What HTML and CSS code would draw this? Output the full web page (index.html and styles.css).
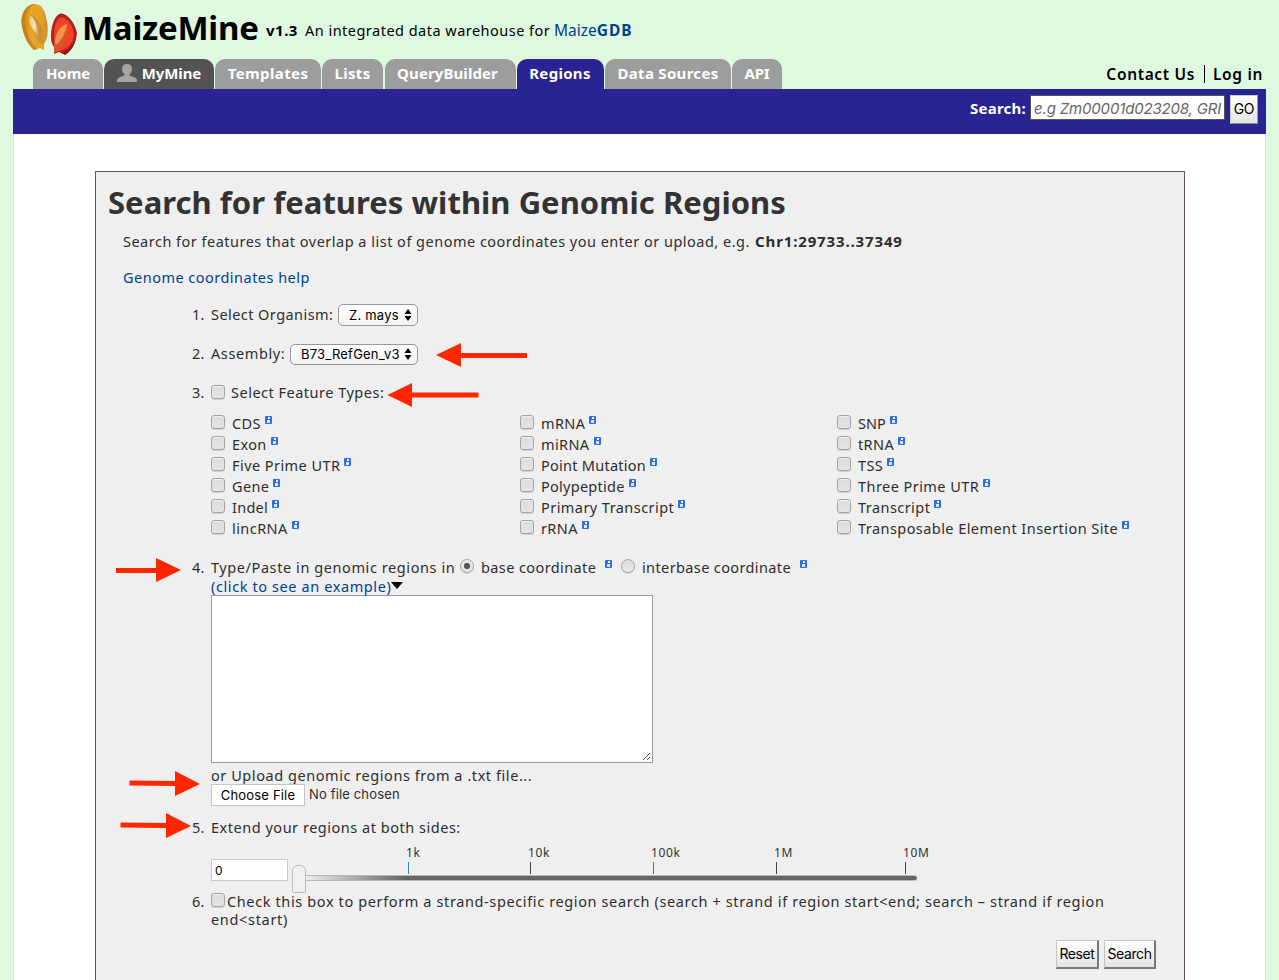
FILE: index.html
```html
<!DOCTYPE html>
<html lang="en">
<head>
<meta charset="utf-8">
<title>MaizeMine: Regions</title>
<link rel="stylesheet" href="styles.css">
</head>
<body>
<header class="masthead">
  <div class="brand">
    <svg class="logo" width="60" height="56" viewBox="0 0 60 56">
      <defs>
        <linearGradient id="gold" x1="0" x2="1"><stop offset="0" stop-color="#c98418"/><stop offset=".35" stop-color="#e9a522"/><stop offset=".8" stop-color="#e3a02c"/><stop offset="1" stop-color="#c98a2c"/></linearGradient>
        <linearGradient id="shine" x1="0" y1="0" x2="1" y2="1"><stop offset="0" stop-color="#f0c878"/><stop offset=".5" stop-color="#f7dfb4"/><stop offset="1" stop-color="#d08a28"/></linearGradient>
      </defs>
      <path d="M2.500 22C2 11 8 3 16 3C24 3 27 12 28.500 24C29 34 28 39 25 43L25 49L21 47L15 49C8 43 4 33 2.500 22Z" fill="url(#gold)"/>
      <path d="M2.500 22C2 11 8 3 16 3C8 7 5 14 6 23C8 34 12 42 18 48L15 49C8 43 4 33 2.500 22Z" fill="#bd7a1c" opacity=".7"/>
      <path d="M12 14C18 16 26 27 25 41C24 45 20 42 17 36C12 27 9 16 12 14Z" fill="#cf8f35"/>
      <path d="M11.500 14.500C16 17 19 27 20 37C14 30 8 20 11.500 14.500Z" fill="url(#shine)"/>
      <path d="M32 36C32 22 37 13 42 12.500C49 13 56 22 58 32C57 43 52 50 46 54L40 51L35 53L36 47C33 44 32 41 32 36Z" fill="#b51f24"/>
      <path d="M35 35C35 24 38 17 43 16C50 18 54 26 55 34C53 44 49 47 43 49L37 51C35 45 35 40 35 35Z" fill="#ee4424"/>
      <path d="M48 23C51 30 48 42 38 51L35 50C34 39 40 26 48 23Z" fill="#d9542b"/>
      <path d="M48 23C47 31 43 39 37 44C34 37 40 25 48 23Z" fill="#f7924a"/>
      <path d="M44 51C50 49 55 43 57 36C56 44 52 50 46 54Z" fill="#8e1720"/>
    </svg>
    <span class="name">MaizeMine</span>
    <span class="version">v1.3</span>
    <span class="tagline">An integrated data warehouse for</span>
    <a class="gdb">Maize<b>GDB</b></a>
  </div>
  <div class="navrow">
    <nav class="tabs">
      <a class="tab home">Home</a>
      <a class="tab mymine"><svg width="20" height="18" viewBox="0 0 20 18"><path d="M5 5C5 1.500 7 0 10 0S15 1.500 15 5C15 7.500 14 9 12.600 10.200V11.600L18 13.500C19.500 14.200 20 15.500 20 18H0C0 15.500 .500 14.200 2 13.500L7.400 11.600V10.200C6 9 5 7.500 5 5Z" fill="#a4a4a4"/></svg><span>MyMine</span></a>
      <a class="tab templates">Templates</a>
      <a class="tab lists">Lists</a>
      <a class="tab query">QueryBuilder</a>
      <a class="tab regions">Regions</a>
      <a class="tab sources">Data Sources</a>
      <a class="tab api">API</a>
    </nav>
    <div class="account"><a class="contact">Contact Us</a><a class="login">Log in</a></div>
  </div>
</header>
<main class="page">
  <div class="searchbar">
    <label class="search-label">Search:</label>
    <div class="search-input">e.g Zm00001d023208, GRI</div>
    <button class="btn go">GO</button>
  </div>
  <section class="panel">
    <h1>Search for features within Genomic Regions</h1>
    <p class="intro">Search for features that overlap a list of genome coordinates you enter or upload, e.g. <b>Chr1:29733..37349</b></p>
    <p class="help"><a>Genome coordinates help</a></p>
    <ol class="steps">
      <li class="step organism"><span class="num">1.</span><label>Select Organism:</label>
        <span class="select mays"><span>Z. mays</span><svg width="8" height="12" viewBox="0 0 8 12"><path d="M4 0L7.500 5H.500ZM4 12L.500 7H7.500Z"/></svg></span></li>
      <li class="step assembly"><span class="num">2.</span><label>Assembly:</label>
        <span class="select refgen"><span>B73_RefGen_v3</span><svg width="8" height="12" viewBox="0 0 8 12"><path d="M4 0L7.500 5H.500ZM4 12L.500 7H7.500Z"/></svg></span></li>
      <li class="step types"><span class="num">3.</span><i class="check"></i><label>Select Feature Types:</label></li>
      <li class="features">
        <div class="col">
          <div class="feat"><i class="check"></i><span>CDS</span><i class="info"></i></div>
          <div class="feat"><i class="check"></i><span>Exon</span><i class="info"></i></div>
          <div class="feat"><i class="check"></i><span class="wide">Five Prime UTR</span><i class="info"></i></div>
          <div class="feat"><i class="check"></i><span>Gene</span><i class="info"></i></div>
          <div class="feat"><i class="check"></i><span class="tight">Indel</span><i class="info"></i></div>
          <div class="feat"><i class="check"></i><span class="wide">lincRNA</span><i class="info"></i></div>
        </div>
        <div class="col">
          <div class="feat"><i class="check"></i><span>mRNA</span><i class="info"></i></div>
          <div class="feat"><i class="check"></i><span>miRNA</span><i class="info"></i></div>
          <div class="feat"><i class="check"></i><span class="tight">Point Mutation</span><i class="info"></i></div>
          <div class="feat"><i class="check"></i><span class="tight">Polypeptide</span><i class="info"></i></div>
          <div class="feat"><i class="check"></i><span class="wide">Primary Transcript</span><i class="info"></i></div>
          <div class="feat"><i class="check"></i><span>rRNA</span><i class="info"></i></div>
        </div>
        <div class="col">
          <div class="feat"><i class="check"></i><span class="snp">SNP</span><i class="info"></i></div>
          <div class="feat"><i class="check"></i><span>tRNA</span><i class="info"></i></div>
          <div class="feat"><i class="check"></i><span>TSS</span><i class="info"></i></div>
          <div class="feat"><i class="check"></i><span class="wide">Three Prime UTR</span><i class="info"></i></div>
          <div class="feat"><i class="check"></i><span class="wide">Transcript</span><i class="info"></i></div>
          <div class="feat"><i class="check"></i><span class="wide">Transposable Element Insertion Site</span><i class="info"></i></div>
        </div>
      </li>
      <li class="step paste"><span class="num">4.</span><label class="lead">Type/Paste in genomic regions in</label><i class="radio on"></i><label class="base">base coordinate</label><i class="info"></i><i class="radio"></i><label class="inter">interbase coordinate</label><i class="info last"></i></li>
      <li class="body example"><a>(click to see an example)</a><svg width="12" height="7" viewBox="0 0 12 7"><path d="M0 0H12L6 7Z"/></svg></li>
      <li class="body"><div class="textarea"><svg width="9" height="9" viewBox="0 0 9 9"><path d="M1 8L8 1M5 8L8 5" stroke="#555" stroke-width="1" fill="none"/></svg></div></li>
      <li class="body upload">or Upload genomic regions from a .txt file...</li>
      <li class="body file"><button class="choose">Choose File</button><span>No file chosen</span></li>
      <li class="step extend"><span class="num">5.</span><label>Extend your regions at both sides:</label></li>
      <li class="body slider">
        <div class="amount">0</div>
        <div class="scale">
          <div class="ticks"><span>1k</span><span>10k</span><span>100k</span><span>1M</span><span>10M</span></div>
          <div class="track"></div>
          <div class="handle"></div>
        </div>
      </li>
      <li class="step strand"><span class="num">6.</span><i class="check"></i><p>Check this box to perform a strand-specific region search (search + strand if region start&lt;end; search – strand if region</p></li>
      <li class="body strand-end">end&lt;start)</li>
    </ol>
    <div class="actions"><button class="btn reset">Reset</button><button class="btn submit">Search</button></div>
  </section>
</main>
<svg class="arrows" width="1279" height="980" viewBox="0 0 1279 980">
  <g fill="#ff2600">
    <path d="M436 355L461 343V353H527V358H461V367Z"/>
    <path d="M387.500 395L412 383V392.500H478.500V397.500H412V407Z"/>
    <path d="M181 570L156 558V568H116V573H156V582Z"/>
    <path d="M200 784L175 771V781L129.500 780.500V785.500L175 786V796Z"/>
    <path d="M191 826L166 813V823L120.500 822.500V827.500L166 828V838Z"/>
  </g>
</svg>
</body>
</html>
```
FILE: styles.css
```css
* { box-sizing: border-box; }
body {
  margin: 0;
  height: 980px;
  overflow: hidden;
  background: #dff9e0;
  color: #2e2e2e;
  font: 14.5px/20px "Noto Sans", sans-serif;
  letter-spacing: .45px;
  white-space: nowrap;
}
h1, p, ol { margin: 0; padding: 0; }
li { list-style: none; }
a { color: #00408f; }

/* Masthead */
.masthead { height: 89px; display: flex; flex-direction: column; justify-content: space-between; }
.brand { display: flex; align-items: flex-start; height: 57px; padding: 0 0 0 19px; color: #000; }
.logo { width: 60px; height: 56px; margin-top: 1px; flex: none; }
.name { width: 183px; padding-left: 3px; font-size: 33px; font-weight: 700; line-height: 56px; letter-spacing: -.25px; }
.version, .tagline, .gdb { margin-top: 20px; }
.version { width: 39px; margin-left: 4px; font-weight: 700; font-size: 15px; letter-spacing: .5px; }
.tagline { width: 249px; letter-spacing: .48px; }
.gdb { font-size: 15.500px; letter-spacing: 0; }
.gdb b { letter-spacing: .9px; }
.navrow { display: flex; justify-content: space-between; height: 30px; }
.tabs { display: flex; gap: 1px; padding-left: 33px; }
.tab {
  display: flex; align-items: center; justify-content: center;
  height: 30px; border-radius: 10px 10px 0 0; padding-bottom: 2px;
  background: #9d9d9d; color: #fff;
  font-weight: 700; font-size: 15px; letter-spacing: .3px;
}
.home { width: 70px; letter-spacing: -.1px; }
.mymine { width: 110px; background: #535353; gap: 5px; letter-spacing: -.1px; }
.templates { width: 106px; letter-spacing: .4px; }
.lists { width: 61px; }
.query { width: 131px; margin-left: 1px; padding-right: 6px; letter-spacing: .1px; }
.regions { width: 87px; padding-right: 1px; background: #292394; }
.sources { width: 126px; }
.api { width: 50px; letter-spacing: -.1px; }
.account { display: flex; align-items: center; height: 30px; padding-right: 16px; }
.account a { color: #000; font-weight: 600; font-size: 15.500px; line-height: 18px; letter-spacing: .66px; }
.account .contact { padding-right: 9px; border-right: 1px solid #000; }
.account .login { padding-left: 8px; }

/* Page frame */
.page { margin: 0 13px; width: 1253px; height: 891px; background: #fff; border: solid #d9e3da; border-width: 0 1px; }
.searchbar { display: flex; align-items: flex-start; margin: 0 -1px; height: 45px; background: #292394; padding: 6px 8px 0 957px; }
.search-label { width: 60px; padding-top: 3px; color: #fff; font-weight: 700; font-size: 15px; letter-spacing: .24px; }
.search-input { width: 195px; height: 25px; margin-right: 5px; padding: 1px 0 0 3px; background: #fff; border: 1px solid #555; color: #666; font: italic 15px/24px Inter, sans-serif; letter-spacing: -.16px; }
.btn {
  padding: 0; height: 29px; color: #000; font: 14px/26px Inter, sans-serif; letter-spacing: -.4px;
  background: linear-gradient(#fff, #e4e4e4); border: solid; border-width: 1px 2px 2px 1px; border-color: #c4c4c4 #777 #777 #c4c4c4;
}
.go { width: 28px; padding-bottom: 2px; border-width: 1px; border-color: #ccc #999 #888 #ccc; }

/* Region search form */
.panel { width: 1090px; height: 820px; margin: 37px 0 0 81px; background: #efefef; border: 1px solid #62554f; }
h1 { padding: 10px 0 0 12px; font-size: 31px; line-height: 40px; letter-spacing: .03px; color: #333; }
.intro { padding-left: 27px; margin-top: 9px; letter-spacing: .49px; }
.intro b { margin-left: 1px; font-size: 15px; letter-spacing: .86px; }
.help { padding-left: 27px; margin-top: 16px; letter-spacing: .48px; }
.steps { margin-top: 8px; }
.step { display: flex; align-items: center; padding-left: 96px; height: 20px; }
.num { width: 19px; flex: none; letter-spacing: .3px; }
.body { margin-left: 115px; }
.organism { height: 40px; }
.step .num, .step label { margin-top: -3px; }
.organism label { width: 127px; letter-spacing: .44px; }
.assembly { height: 39px; }
.assembly label { width: 79px; letter-spacing: .6px; }
.select {
  display: flex; align-items: center; justify-content: space-between;
  height: 22px; padding: 0 5px 0 10px; color: #000; background: linear-gradient(#fff, #f3f3f3);
  border: 1px solid #989898; border-radius: 5px; font: 13px/20px Inter, sans-serif; letter-spacing: .22px;
}
.mays { width: 80px; }
.refgen { width: 128px; height: 21px; padding-bottom: 1px; }
.types { height: 37px; }
.types .check { margin-top: -2px; }
.step.types .num, .step.types label { margin-top: -1px; }
.types label { margin-left: -1px; letter-spacing: .5px; }
.check {
  width: 14px; height: 14px; margin-right: 7px; flex: none;
  border: 1px solid #a3a3a3; border-radius: 3px; background: linear-gradient(#dcdcdc, #e4e4e4); box-shadow: inset 0 1px 1px #f2f2f2, 0 1px 0 #d2d2d2;
}
.features { display: grid; grid-template-columns: 309px 317px 300px; padding-left: 115px; margin-top: 2px; }
.feat { display: flex; height: 21px; align-items: center; letter-spacing: .38px; }
.feat .check { margin-top: -3px; }
.feat span { margin-top: -1px; }
.feat .wide { letter-spacing: .44px; }
.feat .tight { letter-spacing: .26px; }
.feat .snp { letter-spacing: 0; }
.info { position: relative; width: 7px; height: 8px; margin: -7px 0 0 4px; flex: none; border-radius: 1px; background: #2b6ee8; }
.info::before { content: ""; position: absolute; left: 3px; top: 1px; width: 2px; height: 2px; background: #fff; }
.info::after { content: ""; position: absolute; left: 2px; top: 4px; width: 3px; height: 3px; background: #dfe9fc; }
.paste { margin-top: 19px; height: 19px; }
.step.paste .num, .step.paste label { margin-top: -1px; }
.lead { width: 249px; letter-spacing: .58px; }
.base { width: 120px; letter-spacing: .4px; }
.inter { width: 154px; letter-spacing: .38px; }
.radio { width: 14px; height: 14px; margin: -3px 7px 0 0; flex: none; border: 1px solid #a3a3a3; border-radius: 50%; background: linear-gradient(#dcdcdc, #ebebeb); box-shadow: 0 1px 0 #d2d2d2; }
.radio.on { background: radial-gradient(circle, #555 0 2.800px, #e6e6e6 3.400px); }
.paste .info + .radio { margin-left: 9px; }
.example { display: flex; height: 18px; line-height: 18px; letter-spacing: .6px; }
.example svg { margin-top: 5px; }
.textarea { display: flex; align-items: flex-end; justify-content: flex-end; width: 442px; height: 168px; background: #fff; border: 1px solid #999; padding: 1px; }
.upload { height: 21px; padding-top: 2px; letter-spacing: .56px; }
.file { display: flex; align-items: center; height: 22px; font: 13px/20px Inter, sans-serif; letter-spacing: .15px; }
.choose { width: 94px; height: 22px; margin-right: 4px; padding: 0 0 3px; background: #fff; border: 1px solid #c4c4c4; font: inherit; letter-spacing: .18px; color: #000; }
.file span { margin-top: -2px; }
.extend { margin-top: 12px; letter-spacing: .52px; }
.slider { display: flex; height: 54px; margin-top: 4px; }
.amount { width: 77px; height: 22px; margin-top: 17px; padding-left: 3px; background: #fff; border: 1px solid #c8c8c8; color: #000; font: 12px/21px Inter, sans-serif; }
.scale { position: relative; width: 640px; padding-left: 4px; }
.ticks { display: grid; grid-template-columns: 122px 123px 123px 129px 40px; padding-left: 114px; font-size: 12px; line-height: 20px; letter-spacing: .6px; color: #333; margin-top: 1px; }
.ticks span::after { content: ""; display: block; width: 1px; height: 12px; margin: -1px 0 1px 2px; background: #444; }
.ticks span:first-child::after { background: #3984ad; }
.ticks span:nth-child(3)::after { background: #806b45; }
.track { width: 625px; height: 6px; border: solid #bbb; border-width: 1px 0; border-radius: 3px; background: linear-gradient(90deg, #efefef 2%, #666 18%); }
.handle { position: absolute; left: 4px; top: 23px; width: 14px; height: 28px; border: 1px solid #bbb; border-radius: 6px 6px 2px 2px; background: #f0f0f0; }
.strand { height: 18px; margin-top: -4px; letter-spacing: .62px; }
.strand .check { margin: -2px 2px 0 0; }
.step.strand .num { margin-top: 0; }
.strand-end { height: 18px; line-height: 18px; letter-spacing: .68px; }
.actions { display: flex; justify-content: flex-end; gap: 5px; padding: 12px 28px 0 0; }
.reset { width: 43px; }
.submit { width: 52px; }

/* Callouts over the form */
.arrows { position: absolute; left: 0; top: 0; pointer-events: none; }
```
